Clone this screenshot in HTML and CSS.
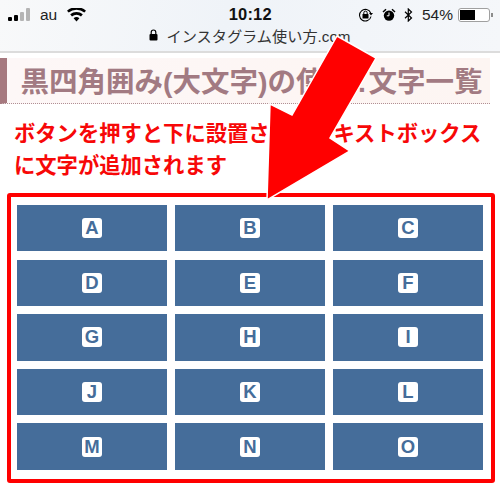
FILE: index.html
```html
<!DOCTYPE html>
<html lang="ja">
<head>
<meta charset="utf-8">
<title>黒四角囲み(大文字)の使用.文字一覧</title>
<link rel="stylesheet" href="styles.css">
</head>
<body>
<header class="chrome">
  <div class="status">
    <div class="status-left">
      <span class="signal"><i class="on s1"></i><i class="on s2"></i><i class="s3"></i><i class="s4"></i></span>
      <span class="carrier">au</span>
      <svg class="wifi" width="19" height="14" viewBox="0 0 19 14"><path d="M9.5 13.5 6.6 10.2a4.3 4.3 0 0 1 5.8 0zM5 8.4 3.2 6.3a9.600 9.600 0 0 1 12.600 0L14 8.400a6.800 6.800 0 0 0-9 0zM1.700 4.600 0 2.700a14.500 14.500 0 0 1 19 0l-1.700 1.900a12 12 0 0 0-15.600 0z" fill="#000"/></svg>
    </div>
    <div class="time">10:12</div>
    <div class="status-right">
      <svg class="rot" width="16" height="14" viewBox="0 0 16 14"><path d="M13 8.500A5.800 5.800 0 1 1 12.700 5" fill="none" stroke="#000" stroke-width="1.100"/><path d="m11 5 4 0-2 2.500z" fill="#000"/><rect x="4.500" y="6" width="6" height="4.500" rx=".6" fill="#000"/><path d="M5.800 6V4.800a1.700 1.700 0 0 1 3.400 0V6" fill="none" stroke="#000"/></svg>
      <svg class="alarm" width="14" height="14" viewBox="0 0 14 14"><circle cx="7" cy="7.600" r="5.200" fill="#000"/><path d="M0.500 3.500 3.500 .8 4.500 1.800 1.500 4.500zM13.500 3.500 10.500 .8 9.500 1.800 12.500 4.500z" fill="#000"/><path d="M7 4.500v3.300H4.800" fill="none" stroke="#fff" stroke-width="1"/></svg>
      <svg class="bt" width="9" height="14" viewBox="0 0 9 14"><path d="M1 3.800 7.500 10 4.300 13V1l3.200 3L1 10.200" fill="none" stroke="#000" stroke-width="1.200"/></svg>
      <span class="pct">54%</span>
      <span class="battery"><span class="level"></span></span><span class="nub"></span>
    </div>
  </div>
  <div class="url">
    <svg class="lock" width="9" height="12" viewBox="0 0 9 12"><rect x="0.500" y="5" width="8" height="6.500" rx="1" fill="#000"/><path d="M2.200 5V3.300a2.300 2.300 0 0 1 4.600 0V5" fill="none" stroke="#000" stroke-width="1.200"/></svg>
    <span>インスタグラム使い方.com</span>
  </div>
</header>
<main class="page">
  <h1 class="title">黒四角囲み(大文字)の<span class="hidden-part">使用.</span>文字一覧</h1>
  <p class="lead">ボタンを押すと下に設置されたテキストボックスに文字が追加されます</p>
  <section class="frame">
    <div class="keys">
      <div class="key"><b>A</b></div><div class="key"><b>B</b></div><div class="key"><b>C</b></div>
      <div class="key"><b>D</b></div><div class="key"><b>E</b></div><div class="key"><b>F</b></div>
      <div class="key"><b>G</b></div><div class="key"><b>H</b></div><div class="key"><b>I</b></div>
      <div class="key"><b>J</b></div><div class="key"><b>K</b></div><div class="key"><b>L</b></div>
      <div class="key"><b>M</b></div><div class="key"><b>N</b></div><div class="key"><b>O</b></div>
    </div>
  </section>
</main>
<svg class="arrow" width="500" height="496" viewBox="0 0 500 496"><polygon points="337,36 376,58 330,138 350,151 267,200 270,104 292,115" fill="#ff0000" stroke="#fff" stroke-width="1.500"/></svg>
</body>
</html>
```
FILE: styles.css
```css
* { box-sizing: border-box; }
html, body { margin: 0; padding: 0; }
body {
  width: 500px;
  height: 496px;
  position: relative;
  overflow: hidden;
  background: #fff;
  font-family: "Liberation Sans", "Noto Sans CJK JP", sans-serif;
}
.chrome {
  height: 53px;
  background: linear-gradient(100deg, #f8f9fa 0%, #eff3f8 45%, #f5f7fa 100%);
  border-bottom: 2px solid #dcdcdc;
  padding: 4px 0 0;
}
.status {
  height: 21px;
  display: grid;
  grid-template-columns: 1fr auto 1fr;
  align-items: center;
  padding: 0 7.500px 0 8px;
}
.status-left { display: flex; align-items: center; }
.signal { display: flex; align-items: flex-end; gap: 2px; height: 13px; }
.signal i { display: block; width: 4px; background: #b4b4b4; border-radius: 1px; }
.signal .on { background: #000; }
.s1 { height: 4px; }
.s2 { height: 6px; }
.s3 { height: 9px; }
.s4 { height: 13px; }
.carrier { font-size: 15.500px; margin-left: 10px; color: #222; }
.wifi { margin-left: 10px; }
.time { font-size: 16.500px; font-weight: 700; color: #111; letter-spacing: .2px; }
.status-right { display: flex; align-items: center; justify-content: flex-end; }
.rot { margin-right: 8px; }
.alarm { margin-right: 8px; }
.bt { margin-right: 9px; }
.pct { font-size: 15.500px; color: #222; margin-right: 5px; }
.battery { display: block; width: 32px; height: 14px; border: 1px solid #a0a0a0; border-radius: 3px; padding: 1px; background: #fff; }
.level { display: block; width: 15px; height: 100%; background: #000; }
.nub { display: block; width: 1.500px; height: 4px; margin-left: 1px; background: #8c8c8c; }
.url {
  display: flex;
  align-items: center;
  justify-content: center;
  gap: 8px;
  height: 18px;
  margin-top: 1px;
  font-size: 15.200px;
  color: #333;
}
.page { display: flow-root; }
.title {
  margin: 5px 10px 0 0;
  height: 46px;
  padding: 5px 0 0 13.500px;
  border-left: 7px solid #a6797f;
  border-bottom: 1px dotted #b08f94;
  background: linear-gradient(90deg, #fdf7f7, #fdf5f2);
  font-size: 28.500px;
  line-height: 38px;
  font-weight: 700;
  color: #a27a82;
  white-space: nowrap;
}
.hidden-part { letter-spacing: 2.500px; }
.lead {
  margin: 14px 0 0;
  padding: 0 10px 0 14px;
  font-size: 21.300px;
  line-height: 32px;
  font-weight: 700;
  color: #f70808;
}
.frame {
  margin: 11px 5px 0 7px;
  border: 4px solid #ff0000;
  border-radius: 3px;
  padding: 8px 8px 9px 6px;
}
.keys {
  display: grid;
  grid-template-columns: repeat(3, 150px);
  grid-auto-rows: 46.400px;
  column-gap: 8px;
  row-gap: 8.200px;
}
.key {
  display: flex;
  align-items: center;
  justify-content: center;
  background: #456d9a;
}
.key b {
  width: 20px;
  height: 20px;
  display: flex;
  align-items: center;
  justify-content: center;
  background: #fff;
  border-radius: 3px;
  color: #456d9a;
  font-family: "Liberation Sans", sans-serif;
  font-size: 18.500px;
  font-weight: 700;
}
.arrow { position: absolute; left: 0; top: 0; pointer-events: none; }
```
